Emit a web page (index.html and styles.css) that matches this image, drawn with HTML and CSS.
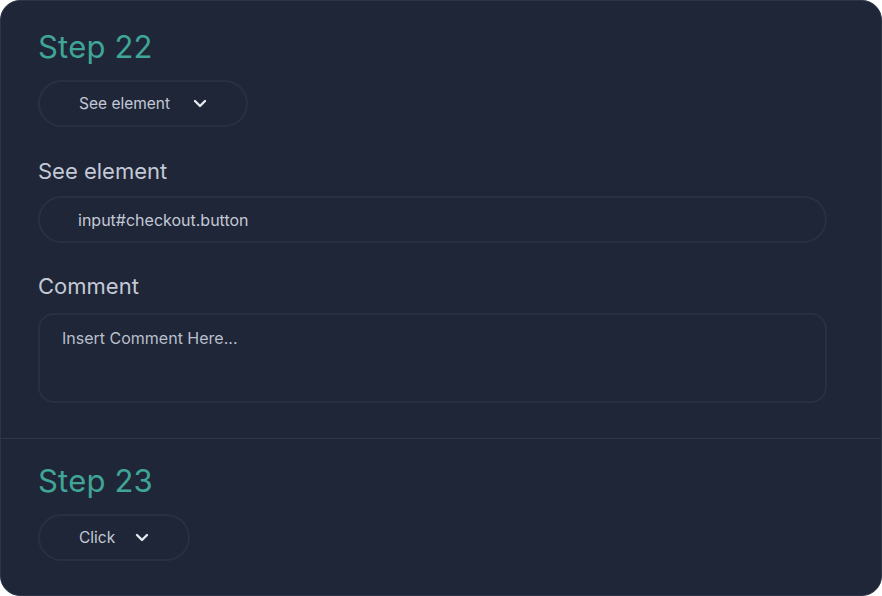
FILE: index.html
```html
<!DOCTYPE html>
<html>
<head>
<meta charset="utf-8">
<link rel="stylesheet" href="styles.css">
</head>
<body>
<div class="card">
  <section class="step step-first">
    <h2 class="step-title">Step 22</h2>
    <button class="select select-wide">
      <span>See element</span>
      <svg class="chev" width="14" height="9" viewBox="0 0 14 9"><path d="M2 2l5 5 5-5" fill="none" stroke="currentColor" stroke-width="2.4" stroke-linecap="round" stroke-linejoin="round"/></svg>
    </button>
    <label class="field-label label-gap">See element</label>
    <input class="text-input" type="text" value="input#checkout.button">
    <label class="field-label label-gap2">Comment</label>
    <textarea class="text-area" placeholder="Insert Comment Here..."></textarea>
  </section>
  <section class="step step-second">
    <h2 class="step-title">Step 23</h2>
    <button class="select">
      <span>Click</span>
      <svg class="chev" width="14" height="9" viewBox="0 0 14 9"><path d="M2 2l5 5 5-5" fill="none" stroke="currentColor" stroke-width="2.4" stroke-linecap="round" stroke-linejoin="round"/></svg>
    </button>
  </section>
</div>
</body>
</html>
```
FILE: styles.css
```css
* { box-sizing: border-box; }
html, body { margin: 0; padding: 0; background: #ffffff; }
body { font-family: Inter, "Noto Sans", sans-serif; }
.card {
  width: 882px;
  height: 596px;
  background: #1f2637;
  border: 1px solid #2c3447;
  border-radius: 20px;
  overflow: hidden;
}
.step { padding: 0 54px 0 37px; }
.step-first { padding-top: 28px; padding-bottom: 35px; border-bottom: 1px solid #2e3649; }
.step-second { padding-top: 24px; }
.step-title {
  margin: 0;
  font-size: 31px;
  line-height: 36px;
  font-weight: 400;
  color: #3fa596;
  letter-spacing: 0.2px;
}
.select {
  display: inline-flex;
  align-items: center;
  gap: 20px;
  height: 47px;
  margin-top: 15px;
  padding: 0 39px 0 39px;
  background: transparent;
  border: 2px solid #283144;
  border-radius: 24px;
  font-family: inherit;
  font-size: 15.5px;
  color: #c3c9d6;
  white-space: nowrap;
}
.select-wide { width: 210px; justify-content: space-between; }
.chev { color: #e6e9f0; display: block; }
.field-label {
  display: block;
  font-size: 22px;
  line-height: 24px;
  color: #c3c9d6;
}
.label-gap { margin-top: 32px; }
.label-gap2 { margin-top: 31px; }
.text-input {
  display: block;
  width: 789px;
  height: 47px;
  margin-top: 13px;
  padding: 0 0 0 38px;
  background: transparent;
  border: 2px solid #283144;
  border-radius: 24px;
  font-family: inherit;
  font-size: 16px;
  color: #c3c9d6;
  outline: none;
}
.text-area {
  display: block;
  width: 789px;
  height: 90px;
  margin-top: 15px;
  padding: 13px 22px;
  background: transparent;
  border: 2px solid #283144;
  border-radius: 16px;
  font-family: inherit;
  font-size: 16px;
  line-height: 20px;
  color: #c3c9d6;
  resize: none;
  outline: none;
}
.text-area::placeholder { color: #b9bfcc; opacity: 1; }
```
